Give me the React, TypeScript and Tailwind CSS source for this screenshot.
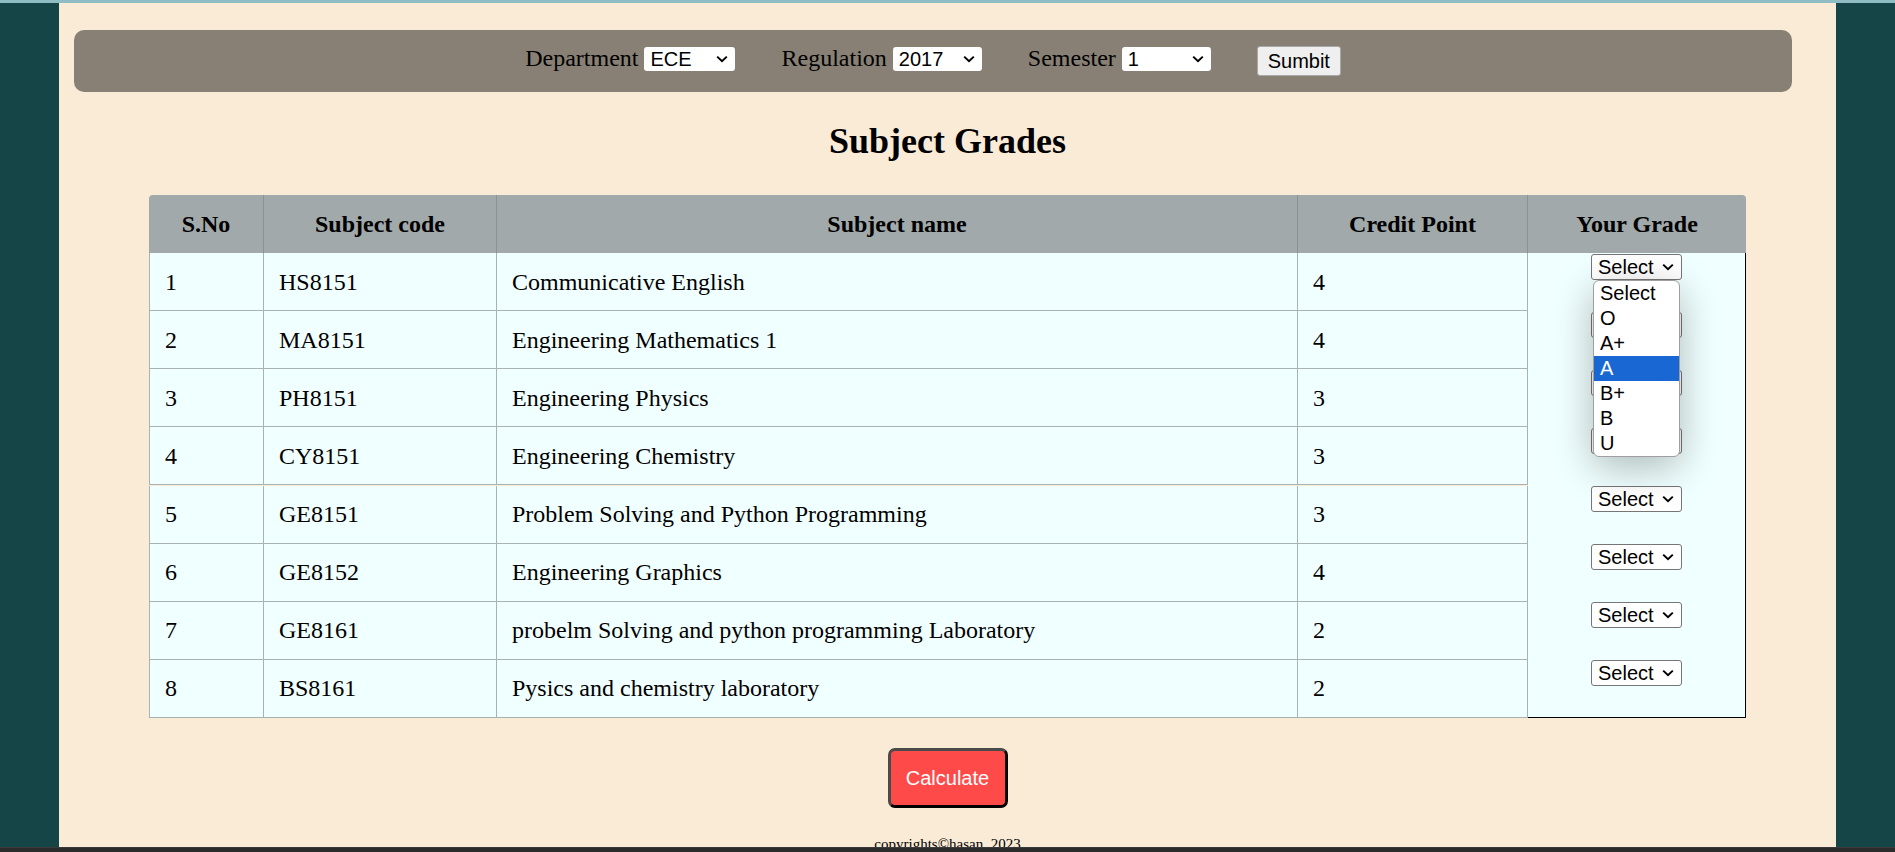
import React from "react";

const subjects = [
  ["1", "HS8151", "Communicative English", "4"],
  ["2", "MA8151", "Engineering Mathematics 1", "4"],
  ["3", "PH8151", "Engineering Physics", "3"],
  ["4", "CY8151", "Engineering Chemistry", "3"],
  ["5", "GE8151", "Problem Solving and Python Programming", "3"],
  ["6", "GE8152", "Engineering Graphics", "4"],
  ["7", "GE8161", "probelm Solving and python programming Laboratory", "2"],
  ["8", "BS8161", "Pysics and chemistry laboratory", "2"],
];

const grades = ["Select", "O", "A+", "A", "B+", "B", "U"];

function Chevron() {
  return (
    <svg width="12" height="8" viewBox="0 0 12 8" className="shrink-0">
      <path d="M1.2 1.6 L6 6.2 L10.8 1.6" fill="none" stroke="#000" strokeWidth="2" />
    </svg>
  );
}

function NavSelect({ value, width }: { value: string; width: string }) {
  return (
    <div
      className={`${width} h-[24px] mb-[4px] bg-white rounded-[3px] pl-[6px] pr-[7px] flex items-center justify-between text-[20px] leading-[23px] text-black font-['Liberation_Sans',Arial,sans-serif]`}
    >
      <span>{value}</span>
      <Chevron />
    </div>
  );
}

function GradeSelect({ open }: { open?: boolean }) {
  return (
    <div className="relative">
      <div className="w-[91px] h-[26px] bg-white border border-[#767676] rounded-[3px] pl-[6px] pr-[7px] flex items-center justify-between text-[20px] leading-[23px] text-black font-['Liberation_Sans',Arial,sans-serif]">
        <span>Select</span>
        <Chevron />
      </div>
      {open && (
        <div className="absolute top-full left-[2px] z-10 w-[87px] bg-white border border-[#9f9f9f] rounded-[6px] overflow-hidden shadow-[0_10px_40px_rgba(0,0,0,0.28)] font-['Liberation_Sans',Arial,sans-serif]">
          {grades.map((g) => (
            <div
              key={g}
              className={`h-[25px] pl-[6px] text-[20px] leading-[25px] ${
                g === "A" ? "bg-[#1967d2] text-white" : "text-black"
              }`}
            >
              {g}
            </div>
          ))}
        </div>
      )}
    </div>
  );
}

export default function App() {
  return (
    <div className="w-[1895px] h-[852px] flex flex-col overflow-hidden font-['Liberation_Serif','Times_New_Roman',serif] text-black">
      <div className="h-[3px] shrink-0 bg-[#90bcc3]" />
      <div className="flex flex-1 min-h-0">
        <div className="w-[59px] bg-[#154547]" />
        <main className="flex-1 bg-[#faebd7] flex flex-col items-center overflow-hidden pt-[27px]">
          {/* top form */}
          <div className="shrink-0 self-stretch ml-[15px] mr-[44px] h-[62px] rounded-[10px] bg-[#898075] flex items-center justify-center gap-[46px]">
            <div className="flex items-center gap-[6px]">
              <span className="text-[24px] leading-[28px] mb-[7px]">Department</span>
              <NavSelect value="ECE" width="w-[91px]" />
            </div>
            <div className="flex items-center gap-[6px]">
              <span className="text-[24px] leading-[28px] mb-[7px]">Regulation</span>
              <NavSelect value="2017" width="w-[89px]" />
            </div>
            <div className="flex items-center gap-[6px]">
              <span className="text-[24px] leading-[28px] mb-[7px]">Semester</span>
              <NavSelect value="1" width="w-[89px]" />
            </div>
            <button className="w-[84px] h-[30px] bg-[#efefef] border border-[#a8a8a8] rounded-[3px] text-[20px] leading-[23px] font-['Liberation_Sans',Arial,sans-serif]">
              Sumbit
            </button>
          </div>

          <h1 className="shrink-0 mt-[29px] text-[36px] leading-[40px] font-bold">Subject Grades</h1>

          {/* table */}
          <div className="shrink-0 mt-[34px] flex w-[1597px]">
            <div className="grid grid-cols-[115px_233px_801px_230px]">
              {["S.No", "Subject code", "Subject name", "Credit Point"].map((h, i) => (
                <div
                  key={h}
                  className={`h-[58px] bg-[#a1a9aa] border-r border-[#8b9393] flex items-center justify-center text-[24px] font-bold ${
                    i === 0 ? "rounded-tl-[4px]" : ""
                  }`}
                >
                  {h}
                </div>
              ))}
              {subjects.map((row) =>
                row.map((cell, j) => (
                  <div
                    key={row[0] + "-" + j}
                    className={`h-[58px] bg-[#f0ffff] border-r border-b border-[#a9b2b2] flex items-center pl-[15px] text-[24px] leading-[28px] ${
                      j === 0 ? "border-l" : ""
                    }`}
                  >
                    {cell}
                  </div>
                ))
              )}
            </div>
            <div className="w-[218px] flex flex-col">
              <div className="h-[58px] shrink-0 bg-[#a1a9aa] rounded-tr-[4px] flex items-center justify-center text-[24px] font-bold">
                Your Grade
              </div>
              <div className="flex-1 bg-[#f0ffff] border-r border-b border-black flex flex-col">
                {subjects.map((row, i) => (
                  <div key={row[0]} className="h-[58px] shrink-0 flex items-start justify-center pt-[1px]">
                    <GradeSelect open={i === 0} />
                  </div>
                ))}
              </div>
            </div>
          </div>

          <button className="shrink-0 mt-[30px] w-[120px] h-[60px] rounded-[7px] bg-[#ff4a4a] border-[3px] border-t-[#4a4a4a] border-l-[#4a4a4a] border-b-black border-r-black text-white text-[20px] leading-[23px] font-['Liberation_Sans',Arial,sans-serif]">
            Calculate
          </button>

          <p className="shrink-0 mt-[28px] text-[15px] leading-[17px]">copyrights©hasan, 2023</p>
        </main>
        <div className="w-[59px] bg-[#154547]" />
      </div>
      <div className="h-[5px] shrink-0 bg-[#2b2b2b] border-t border-[#3a3a3a]" />
    </div>
  );
}
